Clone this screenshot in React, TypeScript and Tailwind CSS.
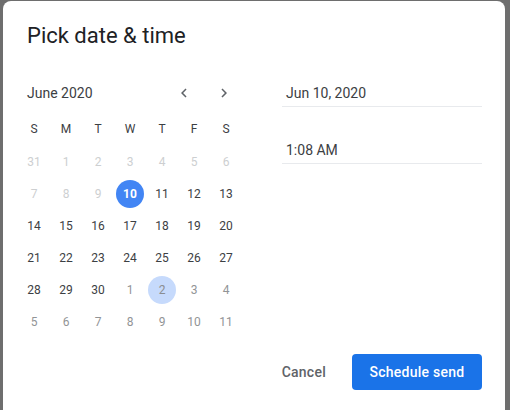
import React from "react";

type Day = { n: number; kind: "past" | "cur" | "next"; sel?: boolean; hi?: boolean };

const rows: Day[][] = [
  [31, 1, 2, 3, 4, 5, 6].map((n) => ({ n, kind: "past" as const })),
  [
    { n: 7, kind: "past" },
    { n: 8, kind: "past" },
    { n: 9, kind: "past" },
    { n: 10, kind: "cur", sel: true },
    { n: 11, kind: "cur" },
    { n: 12, kind: "cur" },
    { n: 13, kind: "cur" },
  ],
  [14, 15, 16, 17, 18, 19, 20].map((n) => ({ n, kind: "cur" as const })),
  [21, 22, 23, 24, 25, 26, 27].map((n) => ({ n, kind: "cur" as const })),
  [
    { n: 28, kind: "cur" },
    { n: 29, kind: "cur" },
    { n: 30, kind: "cur" },
    { n: 1, kind: "next" },
    { n: 2, kind: "next", hi: true },
    { n: 3, kind: "next" },
    { n: 4, kind: "next" },
  ],
  [5, 6, 7, 8, 9, 10, 11].map((n) => ({ n, kind: "next" as const })),
];

const weekdays = ["S", "M", "T", "W", "T", "F", "S"];

function DayCell({ d }: { d: Day }) {
  let circle = "";
  let text = "";
  if (d.sel) {
    circle = "bg-[#4285f4]";
    text = "text-white font-bold";
  } else if (d.hi) {
    circle = "bg-[#c6dafc]";
    text = "text-[#8a8d91]";
  } else if (d.kind === "past") {
    text = "text-[#cdcfd1]";
  } else if (d.kind === "next") {
    text = "text-[#929496]";
  } else {
    text = "text-[#3c4043]";
  }
  return (
    <div className="h-8 flex items-center justify-center">
      <div className={`w-7 h-7 rounded-full flex items-center justify-center text-[12px] leading-none ${circle} ${text}`}>
        {d.n}
      </div>
    </div>
  );
}

function Chevron({ dir }: { dir: "l" | "r" }) {
  return (
    <button className="w-8 h-8 flex items-center justify-center">
      <svg width="18" height="18" viewBox="0 0 24 24" fill="#5f6368">
        {dir === "l" ? (
          <path d="M15.41 7.41L14 6l-6 6 6 6 1.41-1.41L10.83 12z" />
        ) : (
          <path d="M8.59 16.59L10 18l6-6-6-6-1.41 1.41L13.17 12z" />
        )}
      </svg>
    </button>
  );
}

export default function App() {
  return (
    <div
      className="w-[510px] h-[410px] overflow-hidden bg-[#6e6e6e] pl-[3px] pt-[1px]"
      style={{ fontFamily: "Roboto, 'Liberation Sans', sans-serif" }}
    >
      <div className="w-[502px] h-[430px] bg-white rounded-lg pt-[21px]">
        <h1 className="pl-6 text-[22px] leading-[28px] text-[#202124]">Pick date &amp; time</h1>
        <div className="mt-[27px] flex items-start pl-[15px]">
          <div className="w-[224px]">
            <div className="h-8 flex items-center">
              <span className="pl-[9px] text-[14px] text-[#3c4043]">June 2020</span>
              <div className="ml-auto mr-[2px] flex gap-2">
                <Chevron dir="l" />
                <Chevron dir="r" />
              </div>
            </div>
            <div className="mt-1 grid grid-cols-7 h-8">
              {weekdays.map((w, i) => (
                <div key={i} className="flex items-center justify-center text-[12px] text-[#3c4043]">
                  {w}
                </div>
              ))}
            </div>
            <div className="mt-[1px]">
              {rows.map((r, i) => (
                <div key={i} className="grid grid-cols-7">
                  {r.map((d, j) => (
                    <DayCell key={j} d={d} />
                  ))}
                </div>
              ))}
            </div>
          </div>
          <div className="ml-10 w-[200px]">
            <div className="h-[30px] border-b border-[#e8eaed] flex items-end pb-[3px] pl-1 text-[14px] leading-5 text-[#3c4043]">
              Jun 10, 2020
            </div>
            <div className="mt-[27px] h-[30px] border-b border-[#e8eaed] flex items-end pb-[3px] pl-1 text-[14px] leading-5 text-[#3c4043]">
              1:08 AM
            </div>
          </div>
        </div>
        <div className="mt-4 flex justify-end items-center pr-[23px] gap-[10px]">
          <button className="h-9 px-4 text-[14px] font-medium tracking-[0.25px] text-[#5f6368]">Cancel</button>
          <button className="h-9 w-[130px] rounded bg-[#1a73e8] text-white text-[14px] font-medium tracking-[0.25px]">
            Schedule send
          </button>
        </div>
      </div>
    </div>
  );
}
